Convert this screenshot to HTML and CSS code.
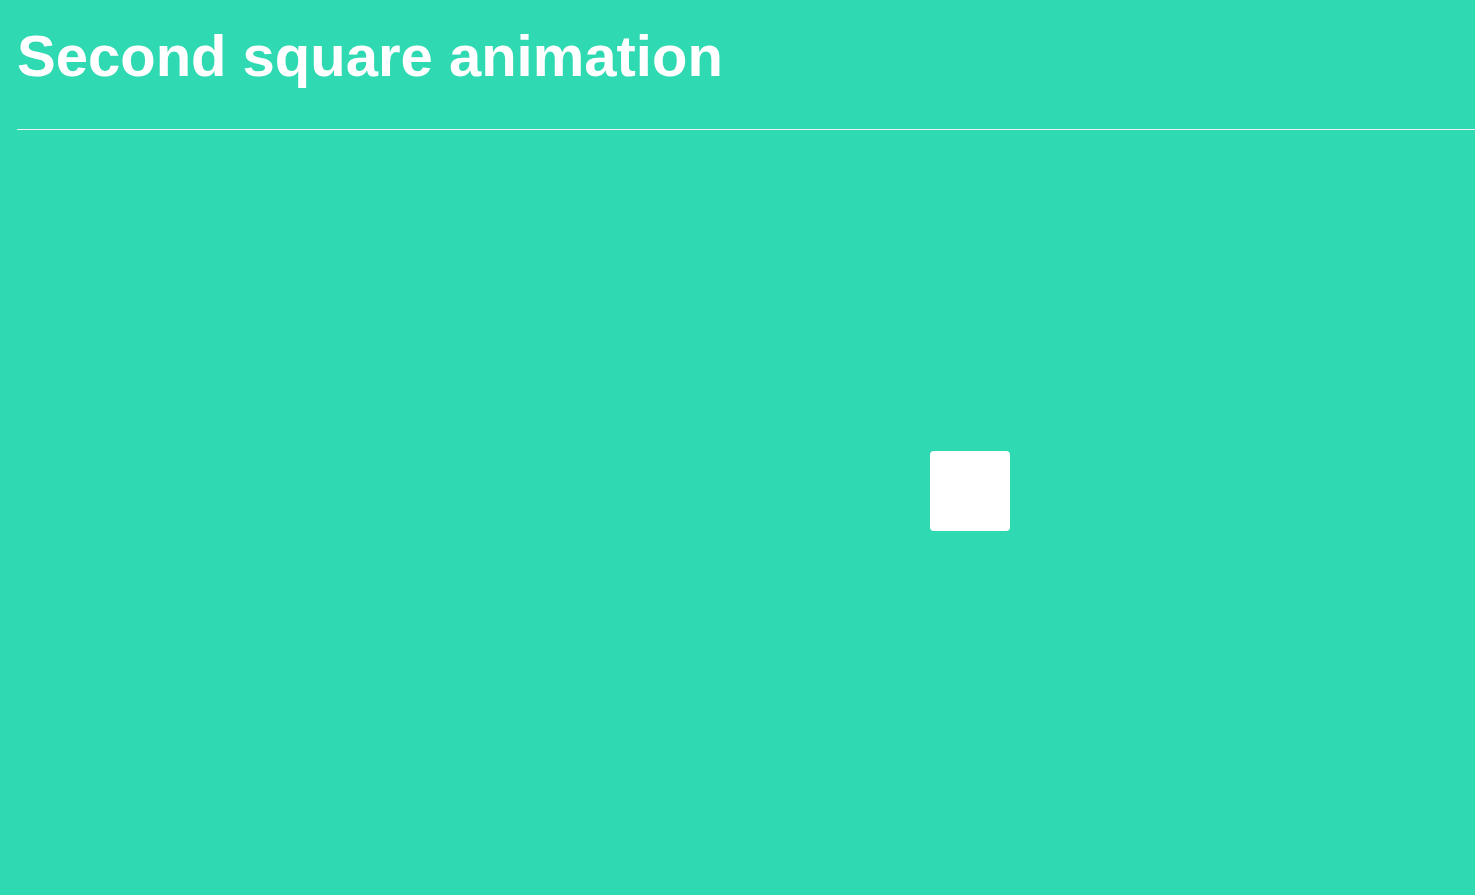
FILE: index.html
```html
<!DOCTYPE html>
<html>
<head>
<meta charset="utf-8">
<title>Second square animation</title>
<link rel="stylesheet" href="styles.css">
</head>
<body>
<header class="page-header">
  <h1 class="title">Second square animation</h1>
</header>
<main class="stage">
  <div class="square"></div>
</main>
</body>
</html>
```
FILE: styles.css
```css
html, body {
  margin: 0;
  padding: 0;
  background: #2fdab3;
  height: 100%;
  overflow: hidden;
}
body {
  font-family: "Liberation Sans", Arial, Helvetica, sans-serif;
  color: #ffffff;
}
.page-header {
  margin-left: 17px;
  height: 130px;
  border-bottom: 1px solid #f0f0f0;
  box-sizing: border-box;
  display: flex;
  align-items: flex-start;
}
.title {
  margin: 0;
  padding-top: 22px;
  font-size: 58px;
  font-weight: bold;
  line-height: 68px;
}
.stage {
  padding-top: 321px;
  padding-left: 930px;
}
.square {
  width: 80px;
  height: 80px;
  background: #ffffff;
  border-radius: 4px;
}
```
